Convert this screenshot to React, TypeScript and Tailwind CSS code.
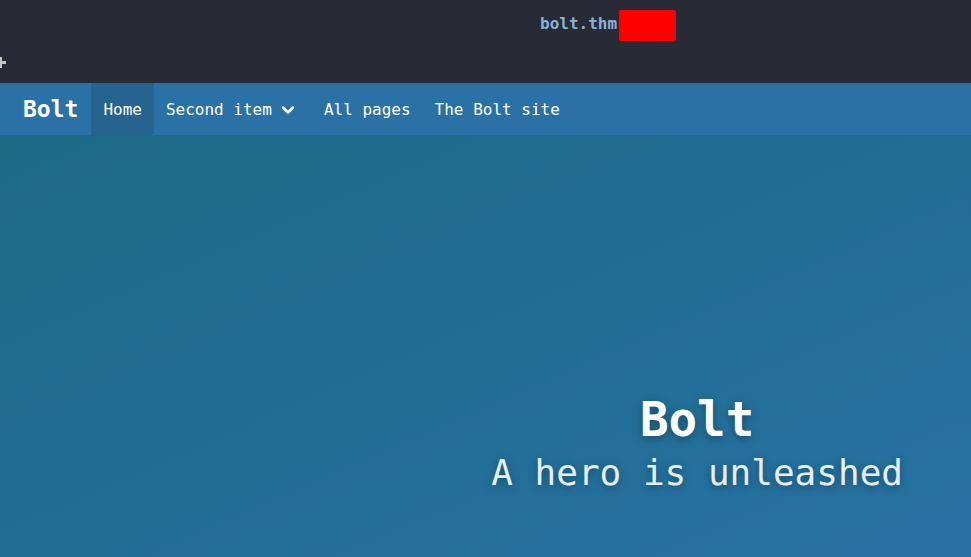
import { ChevronDown } from "lucide-react";

const navItems = ["All pages", "The Bolt site"];

const App = () => {
  return (
    <div className="flex h-[557px] w-[971px] flex-col overflow-hidden font-['DejaVu_Sans_Mono',monospace]">
      {/* Browser chrome */}
      <div className="relative flex h-[83px] shrink-0 flex-col bg-[#282a36]">
        <div className="flex h-[52px] items-start pl-[540px] pt-[10px]">
          <span className="mt-[2px] text-[16px] font-bold leading-[24px] text-[#8ab2d6]">bolt.thm</span>
          <span className="ml-[2px] h-[31px] w-[57px] rounded-[2px] bg-[#ff0000]" />
        </div>
        {/* new tab plus, cut off at the edge */}
        <span className="absolute left-[-4px] top-[61px] h-[3px] w-[10px] bg-[#c4c4c4]" />
        <span className="absolute left-[-1px] top-[57px] h-[11px] w-[3px] bg-[#c4c4c4]" />
      </div>

      {/* Navbar */}
      <nav className="flex h-[52px] shrink-0 items-stretch bg-[#2a72a5] text-[16px] text-white">
        <a className="flex items-center pl-[23px] pr-[13px] pt-[1px] text-[23px] font-bold">Bolt</a>
        <a className="flex items-center bg-[#27638f] px-[12px] pt-[2px]">Home</a>
        <a className="flex items-center gap-[6px] pl-[12px] pr-[14px] pt-[2px]">
          Second item
          <ChevronDown size={20} strokeWidth={3} />
        </a>
        {navItems.map((item) => (
          <a key={item} className="flex items-center px-[12px] pt-[2px]">
            {item}
          </a>
        ))}
      </nav>

      {/* Hero */}
      <section className="flex flex-1 justify-end bg-gradient-to-br from-[#1b6a86] to-[#2772a3] pr-[68px] pt-[258px]">
        <div className="flex flex-col items-center text-center [text-shadow:0_2px_8px_rgba(0,0,0,0.35)]">
          <h1 className="text-[47.5px] font-bold leading-[54px] text-white">Bolt</h1>
          <p className="mt-[6px] text-[36px] leading-[40px] text-[#e6eef4]">A hero is unleashed</p>
        </div>
      </section>
    </div>
  );
};

export default App;
